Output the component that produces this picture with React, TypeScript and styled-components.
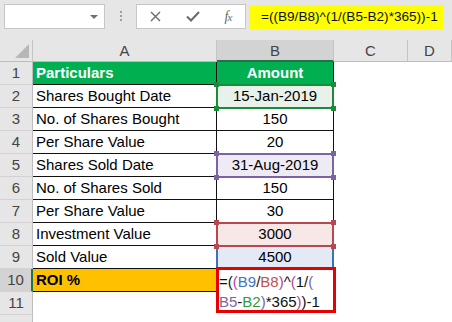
import React from 'react';
import styled, { createGlobalStyle } from 'styled-components';

const GlobalStyle = createGlobalStyle`
  html, body { margin: 0; padding: 0; background: #ffffff; }
  body { font-family: "Liberation Sans", Arial, sans-serif; }
`;

const Sheet = styled.div`
  width: 452px;
  height: 322px;
  overflow: hidden;
  background: #ffffff;
`;

const FormulaBar = styled.div`
  height: 40px;
  box-sizing: border-box;
  padding: 4px 0 0 4px;
  background: #e6e6e6;
  display: flex;
  align-items: flex-start;
`;

const NameBox = styled.div`
  width: 101px;
  height: 25px;
  box-sizing: border-box;
  background: #ffffff;
  border: 1px solid #c6c6c6;
  display: flex;
  align-items: center;
  justify-content: flex-end;
  padding-right: 6px;
`;

const Caret = styled.span`
  width: 0;
  height: 0;
  border-left: 4px solid transparent;
  border-right: 4px solid transparent;
  border-top: 4px solid #707070;
`;

const Grip = styled.span`
  width: 2px;
  height: 11px;
  margin: 7px 0 0 15px;
  background: repeating-linear-gradient(to bottom, #9c9c9c 0 2px, transparent 2px 4px);
`;

const IconBox = styled.div`
  width: 110px;
  height: 25px;
  margin-left: 14px;
  box-sizing: border-box;
  background: #ffffff;
  border: 1px solid #c6c6c6;
  display: grid;
  grid-template-columns: 37px 37px 34px;
  align-items: center;
  justify-items: center;
  color: #6a6a6a;
`;

const Fx = styled.span`
  font-family: "Liberation Serif", "Times New Roman", serif;
  font-style: italic;
  font-size: 14px;
  color: #6a6a6a;
  letter-spacing: -1px;

  small {
    font-size: 11px;
  }
`;

const FormulaInput = styled.div`
  width: 194px;
  height: 24px;
  margin: 1px 0 0 3px;
  box-sizing: border-box;
  padding-left: 12px;
  background: #ffff00;
  font-size: 13.6px;
  line-height: 24px;
  color: #111111;
  white-space: nowrap;
`;

const Grid = styled.div`
  display: grid;
  grid-template-columns: 33px 184px 117px 74px 44px;
  grid-template-rows: 22px;
  grid-auto-rows: 23px;
  font-size: 15px;
`;

const Corner = styled.div`
  box-sizing: border-box;
  background: #e6e6e6;
  border-right: 1px solid #c4c4c4;
  border-bottom: 1px solid #bdbdbd;
  display: flex;
  align-items: flex-end;
  justify-content: flex-end;
  padding: 0 3px 3px 0;
`;

const CornerMark = styled.span`
  width: 0;
  height: 0;
  border-left: 14px solid transparent;
  border-bottom: 14px solid #b7b7b7;
`;

const ColHead = styled.div<{ $active?: boolean }>`
  box-sizing: border-box;
  background: ${p => (p.$active ? '#d3d3d3' : '#e6e6e6')};
  border-right: 1px solid #c4c4c4;
  border-bottom: ${p => (p.$active ? '2px solid #217346' : '1px solid #bdbdbd')};
  color: #444444;
  text-align: center;
  line-height: 21px;
`;

const RowHead = styled.div<{ $active?: boolean }>`
  box-sizing: border-box;
  background: ${p => (p.$active ? '#d3d3d3' : '#e6e6e6')};
  border-right: ${p => (p.$active ? '2px solid #217346' : '1px solid #bdbdbd')};
  border-bottom: 1px solid #d2d2d2;
  color: #444444;
  text-align: center;
  line-height: 22px;
`;

const Cell = styled.div<{ $fill?: string; $bold?: boolean; $center?: boolean; $ink?: string; $lined?: boolean }>`
  position: relative;
  box-sizing: border-box;
  padding: 0 3px;
  background: ${p => p.$fill || '#ffffff'};
  border-right: ${p => (p.$lined ? '1px solid #111111' : 'none')};
  border-bottom: ${p => (p.$lined ? '1px solid #111111' : 'none')};
  color: ${p => p.$ink || '#000000'};
  font-weight: ${p => (p.$bold ? 700 : 400)};
  text-align: ${p => (p.$center ? 'center' : 'left')};
  line-height: 22px;
  white-space: nowrap;
`;

const Highlight = styled.div<{ $line: string; $layer: number }>`
  position: absolute;
  top: -1px;
  left: -1px;
  right: -1px;
  bottom: -2px;
  border: 2px solid ${p => p.$line};
  z-index: ${p => p.$layer};
  pointer-events: none;
`;

const Handle = styled.span<{ $line: string; $x: 'left' | 'right'; $y: 'top' | 'bottom' }>`
  position: absolute;
  width: 5px;
  height: 5px;
  background: ${p => p.$line};
  ${p => p.$x}: -4px;
  ${p => p.$y}: -4px;
`;

const EditBox = styled.div`
  position: absolute;
  top: -2px;
  left: -1px;
  right: -3px;
  height: 46px;
  box-sizing: border-box;
  border: 3px solid #e60000;
  background: #ffffff;
  padding: 2px 0 0 0;
  z-index: 4;
  line-height: 20px;
  color: #111111;
  text-align: left;
`;

const Ref = styled.span<{ $ink: string }>`
  color: ${p => p.$ink};
`;

const BLUE = '#4472c4';
const RED = '#c0504d';
const PURPLE = '#8064a2';
const GREEN = '#2f9a3c';
const PAREN2 = '#b0479c';

type Mark = { line: string; bg: string; handles: boolean; layer: number };

const marks: Record<string, Mark> = {
  green: { line: '#1d8a3a', bg: '#e9f2ea', handles: true, layer: 2 },
  purple: { line: '#7e62a8', bg: '#efebf5', handles: true, layer: 2 },
  red: { line: '#b9474f', bg: '#f7e7e7', handles: true, layer: 3 },
  blue: { line: '#3f70b8', bg: '#e3eaf6', handles: false, layer: 1 },
};

const rows: { label: string; value: string; mark?: string }[] = [
  { label: 'Shares Bought Date', value: '15-Jan-2019', mark: 'green' },
  { label: 'No. of Shares Bought', value: '150' },
  { label: 'Per Share Value', value: '20' },
  { label: 'Shares Sold Date', value: '31-Aug-2019', mark: 'purple' },
  { label: 'No. of Shares Sold', value: '150' },
  { label: 'Per Share Value', value: '30' },
  { label: 'Investment Value', value: '3000', mark: 'red' },
  { label: 'Sold Value', value: '4500', mark: 'blue' },
];

const CrossIcon = () => (
  <svg width="11" height="11" viewBox="0 0 11 11">
    <path d="M1 1 L10 10 M10 1 L1 10" stroke="#6a6a6a" strokeWidth="1.4" fill="none" />
  </svg>
);

const CheckIcon = () => (
  <svg width="14" height="11" viewBox="0 0 14 11">
    <path d="M1 5.5 L5 9.5 L13 1" stroke="#6a6a6a" strokeWidth="2" fill="none" />
  </svg>
);

const Handles = ({ line }: { line: string }) => (
  <>
    <Handle $line={line} $x="left" $y="top" />
    <Handle $line={line} $x="right" $y="top" />
    <Handle $line={line} $x="left" $y="bottom" />
    <Handle $line={line} $x="right" $y="bottom" />
  </>
);

const App = () => {
  return (
    <Sheet>
      <GlobalStyle />
      <FormulaBar>
        <NameBox>
          <Caret />
        </NameBox>
        <Grip />
        <IconBox>
          <CrossIcon />
          <CheckIcon />
          <Fx>
            f<small>x</small>
          </Fx>
        </IconBox>
        <FormulaInput>=((B9/B8)^(1/(B5-B2)*365))-1</FormulaInput>
      </FormulaBar>

      <Grid>
        <Corner>
          <CornerMark />
        </Corner>
        <ColHead>A</ColHead>
        <ColHead $active>B</ColHead>
        <ColHead>C</ColHead>
        <ColHead>D</ColHead>

        <RowHead>1</RowHead>
        <Cell $fill="#00b050" $ink="#ffffff" $bold $lined>Particulars</Cell>
        <Cell $fill="#00b050" $ink="#ffffff" $bold $center $lined>Amount</Cell>
        <Cell />
        <Cell />

        {rows.map((row, index) => {
          const mark = row.mark ? marks[row.mark] : undefined;
          return (
            <React.Fragment key={index}>
              <RowHead>{index + 2}</RowHead>
              <Cell $lined>{row.label}</Cell>
              <Cell $lined $center $fill={mark?.bg}>
                {row.value}
                {mark && (
                  <Highlight $line={mark.line} $layer={mark.layer}>
                    {mark.handles && <Handles line={mark.line} />}
                  </Highlight>
                )}
              </Cell>
              <Cell />
              <Cell />
            </React.Fragment>
          );
        })}

        <RowHead $active>10</RowHead>
        <Cell $fill="#ffc000" $bold $lined>ROI %</Cell>
        <Cell $lined>
          <EditBox>
            =(<Ref $ink={PAREN2}>(</Ref>
            <Ref $ink={BLUE}>B9</Ref>/<Ref $ink={RED}>B8</Ref>
            <Ref $ink={PAREN2}>)</Ref>^<Ref $ink={PAREN2}>(</Ref>1/<Ref $ink={PURPLE}>(</Ref>
            <br />
            <Ref $ink={PURPLE}>B5</Ref>-<Ref $ink={GREEN}>B2</Ref>
            <Ref $ink={PURPLE}>)</Ref>*365<Ref $ink={PAREN2}>)</Ref>)-1
          </EditBox>
        </Cell>
        <Cell />
        <Cell />

        <RowHead>11</RowHead>
        <Cell />
        <Cell />
        <Cell />
        <Cell />

        <RowHead />
        <Cell />
        <Cell />
        <Cell />
        <Cell />
      </Grid>
    </Sheet>
  );
};

export default App;
